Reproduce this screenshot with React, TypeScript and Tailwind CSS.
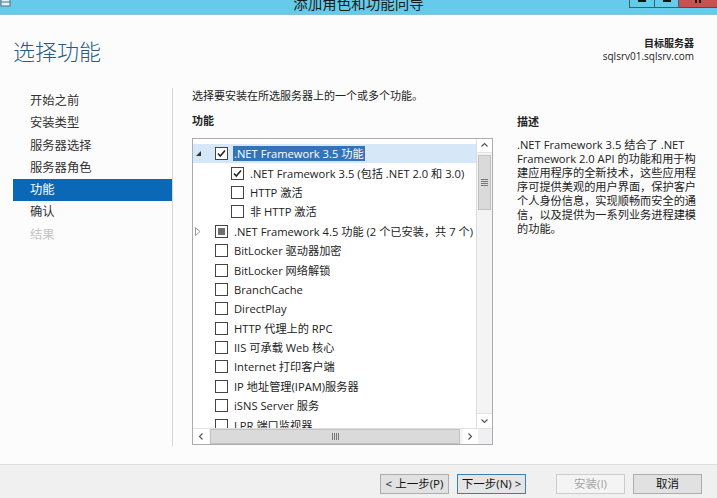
import React from "react";

type Row = {
  lvl: 1 | 2;
  arrow?: "open" | "closed";
  cb: "on" | "off" | "part";
  text: string;
  selected?: boolean;
};

const rows: Row[] = [
  { lvl: 1, arrow: "open", cb: "on", text: ".NET Framework 3.5 功能", selected: true },
  { lvl: 2, cb: "on", text: ".NET Framework 3.5 (包括 .NET 2.0 和 3.0)" },
  { lvl: 2, cb: "off", text: "HTTP 激活" },
  { lvl: 2, cb: "off", text: "非 HTTP 激活" },
  { lvl: 1, arrow: "closed", cb: "part", text: ".NET Framework 4.5 功能 (2 个已安装，共 7 个)" },
  { lvl: 1, cb: "off", text: "BitLocker 驱动器加密" },
  { lvl: 1, cb: "off", text: "BitLocker 网络解锁" },
  { lvl: 1, cb: "off", text: "BranchCache" },
  { lvl: 1, cb: "off", text: "DirectPlay" },
  { lvl: 1, cb: "off", text: "HTTP 代理上的 RPC" },
  { lvl: 1, cb: "off", text: "IIS 可承载 Web 核心" },
  { lvl: 1, cb: "off", text: "Internet 打印客户端" },
  { lvl: 1, cb: "off", text: "IP 地址管理(IPAM)服务器" },
  { lvl: 1, cb: "off", text: "iSNS Server 服务" },
  { lvl: 1, cb: "off", text: "LPR 端口监视器" },
];

const navItems = ["开始之前", "安装类型", "服务器选择", "服务器角色", "功能", "确认", "结果"];

const descLines = [
  ".NET Framework 3.5 结合了 .NET",
  "Framework 2.0 API 的功能和用于构",
  "建应用程序的全新技术，这些应用程",
  "序可提供美观的用户界面，保护客户",
  "个人身份信息，实现顺畅而安全的通",
  "信，以及提供为一系列业务进程建模",
  "的功能。",
];

function CheckBox({ state }: { state: "on" | "off" | "part" }) {
  return (
    <div className="w-[13px] h-[13px] border border-[#444] bg-white flex items-center justify-center shrink-0">
      {state === "on" && (
        <svg width="11" height="11" viewBox="0 0 11 11">
          <path d="M2 5.5 L4.3 8 L9 2.5" fill="none" stroke="#222" strokeWidth="1.5" />
        </svg>
      )}
      {state === "part" && <div className="w-[7px] h-[7px] bg-[#6e6e6e]" />}
    </div>
  );
}

function Arrow({ kind }: { kind?: "open" | "closed" }) {
  if (kind === "open")
    return (
      <svg width="7" height="7" viewBox="0 0 7 7">
        <path d="M6 1 L6 6 L1 6 Z" fill="#333" />
      </svg>
    );
  if (kind === "closed")
    return (
      <svg width="6" height="9" viewBox="0 0 6 9">
        <path d="M0.5 0.5 L5 4.5 L0.5 8.5 Z" fill="none" stroke="#9a9a9a" strokeWidth="1" />
      </svg>
    );
  return null;
}

function Chevron({ dir }: { dir: "up" | "down" | "left" | "right" }) {
  const d =
    dir === "up"
      ? "M1.5 5.5 L4.5 2.5 L7.5 5.5"
      : dir === "down"
      ? "M1.5 2.5 L4.5 5.5 L7.5 2.5"
      : dir === "left"
      ? "M5.5 1.5 L2.5 4.5 L5.5 7.5"
      : "M2.5 1.5 L5.5 4.5 L2.5 7.5";
  return (
    <svg width="9" height="9" viewBox="0 0 9 9">
      <path d={d} fill="none" stroke="#555" strokeWidth="1.2" />
    </svg>
  );
}

function Button({ children, variant }: { children: React.ReactNode; variant?: "focus" | "disabled" }) {
  const cls =
    variant === "focus"
      ? "border-[#3c7fb1] bg-[#e5e5e5] text-[#111]"
      : variant === "disabled"
      ? "border-[#cccccc] bg-[#f4f4f4] text-[#a3a3a3]"
      : "border-[#adadad] bg-[#e1e1e1] text-[#111]";
  return (
    <div className={`w-[69px] h-[20px] border flex items-center justify-center text-[11.5px] leading-[18px] ${cls}`}>
      {children}
    </div>
  );
}

export default function App() {
  return (
    <div className="w-[717px] h-[498px] flex flex-col overflow-hidden bg-[#fcfcfc] font-['Open_Sans','Noto_Sans_CJK_SC',sans-serif] text-[#1e1e1e]">
      {/* Title bar */}
      <div className="h-[15px] shrink-0 bg-[#66cbea] border-b border-[#88c3d8] grid grid-cols-[1fr_auto_1fr] overflow-hidden">
        <div className="flex items-start">
          <svg width="12" height="8" viewBox="0 0 12 8">
            <rect x="1" y="-2" width="9" height="8" fill="#dff3fa" stroke="#5b6f78" strokeWidth="1" />
            <path d="M1 2 H10" stroke="#5b6f78" strokeWidth="1" />
          </svg>
        </div>
        <div className="flex items-start justify-center">
          <span className="text-[14.5px] leading-[15px] mt-[-5px] text-[#1b1b1b] font-['Noto_Sans_CJK_SC',sans-serif]">
            添加角色和功能向导
          </span>
        </div>
        <div className="flex justify-end items-start">
          <div className="w-[26px] h-[8px] border border-t-0 border-[#3e5f6e] bg-[#66cbea] flex justify-center">
            <div className="w-[8px] h-[2px] bg-[#111]" />
          </div>
          <div className="w-[24px] h-[8px] border border-t-0 border-l-0 border-[#3e5f6e] bg-[#66cbea] flex justify-center">
            <div className="w-[8px] h-[2px] bg-[#111]" />
          </div>
          <div className="w-[38px] h-[8px] bg-[#c75050] border-b border-[#7a3a3a] flex justify-center">
            <div className="w-[2px] h-[3px] bg-[#2a1010] mr-[2px]" />
            <div className="w-[2px] h-[3px] bg-[#2a1010]" />
          </div>
        </div>
      </div>

      {/* Header */}
      <div className="h-[73px] shrink-0 flex justify-between">
        <div className="pl-[13px] pt-[20px] text-[22px] leading-[31px] text-[#245c85] font-['Noto_Sans_CJK_SC',sans-serif] font-light">
          选择功能
        </div>
        <div className="pr-[23px] pt-[22px] text-[10px] leading-[12.5px] text-right text-[#222]">
          <div className="font-semibold">目标服务器</div>
          <div>sqlsrv01.sqlsrv.com</div>
        </div>
      </div>

      {/* Body */}
      <div className="h-[358px] shrink-0 flex">
        <div className="w-[173px] shrink-0 border-r border-[#d6d6d6] pt-[2px]">
          {navItems.map((n, i) => (
            <div
              key={n}
              className={`ml-[13px] h-[22.3px] pl-[17px] flex items-center text-[12.3px] ${
                i === 4 ? "bg-[#0a68b6] text-white" : i === 6 ? "text-[#c4c4c4]" : "text-[#333]"
              }`}
            >
              {n}
            </div>
          ))}
        </div>

        <div className="flex pl-[19px] pt-[1px]">
          <div className="w-[301px] flex flex-col">
            <div className="text-[11px] leading-[14px] text-[#222] whitespace-nowrap">
              选择要安装在所选服务器上的一个或多个功能。
            </div>
            <div className="mt-[11px] text-[11px] leading-[14px] font-bold text-[#222]">功能</div>
            <div className="mt-[10px] h-[307px] border border-[#a9abb0] bg-white flex flex-col">
              <div className="flex h-[289px]">
                <div className="flex-1 pt-[5px] overflow-hidden">
                  {rows.map((r, i) => (
                    <div
                      key={i}
                      className={`h-[19.4px] flex items-center whitespace-nowrap text-[11.2px] ${
                        r.selected ? "bg-[#d6e8f8]" : ""
                      }`}
                    >
                      {r.lvl === 1 ? (
                        <div className="w-[22px] shrink-0 pl-[2px] flex items-center">
                          <Arrow kind={r.arrow} />
                        </div>
                      ) : (
                        <div className="w-[38px] shrink-0" />
                      )}
                      <CheckBox state={r.cb} />
                      <span
                        className={`ml-[5px] px-[1px] leading-[15px] ${
                          r.selected ? "bg-[#3373b8] text-white" : "text-[#222]"
                        }`}
                      >
                        {r.text}
                      </span>
                    </div>
                  ))}
                </div>
                <div className="w-[16px] shrink-0 bg-[#f4f4f4] border-l border-[#dcdcdc] flex flex-col">
                  <div className="h-[14px] bg-white flex items-center justify-center border-b border-[#e4e4e4]">
                    <Chevron dir="up" />
                  </div>
                  <div className="mt-[2px] mx-[1px] h-[55px] bg-[#dadada] border border-[#c2c2c2] flex flex-col items-center justify-center gap-[1px]">
                    <div className="w-[7px] h-[1px] bg-[#777]" />
                    <div className="w-[7px] h-[1px] bg-[#777]" />
                    <div className="w-[7px] h-[1px] bg-[#777]" />
                    <div className="w-[7px] h-[1px] bg-[#777]" />
                  </div>
                  <div className="flex-1" />
                  <div className="h-[15px] bg-white flex items-center justify-center border-t border-[#e4e4e4]">
                    <Chevron dir="down" />
                  </div>
                </div>
              </div>
              <div className="h-[16px] flex border-t border-[#e0e0e0] bg-[#f4f4f4]">
                <div className="w-[16px] bg-white flex items-center justify-center">
                  <Chevron dir="left" />
                </div>
                <div className="ml-[1px] w-[250px] bg-[#dadada] border border-[#c2c2c2] flex items-center justify-center gap-[1px]">
                  <div className="w-[1px] h-[7px] bg-[#777]" />
                  <div className="w-[1px] h-[7px] bg-[#777]" />
                  <div className="w-[1px] h-[7px] bg-[#777]" />
                  <div className="w-[1px] h-[7px] bg-[#777]" />
                </div>
                <div className="ml-[3px] w-[15px] bg-white flex items-center justify-center">
                  <Chevron dir="right" />
                </div>
                <div className="flex-1 bg-[#f0f0f0]" />
              </div>
            </div>
          </div>

          <div className="ml-[24px] w-[190px] pt-[26px]">
            <div className="text-[11px] leading-[14px] font-bold text-[#222]">描述</div>
            <div className="mt-[9px] text-[11.2px] leading-[14px] text-[#222] whitespace-nowrap">
              {descLines.map((l) => (
                <div key={l}>{l}</div>
              ))}
            </div>
          </div>
        </div>
      </div>

      <div className="h-[18px] shrink-0" />

      {/* Footer */}
      <div className="flex-1 bg-[#f0f0f0] border-t border-[#dedede] flex justify-end items-start pt-[9px] pr-[15px]">
        <Button>&lt; 上一步(P)</Button>
        <div className="w-[8px]" />
        <Button variant="focus">下一步(N) &gt;</Button>
        <div className="w-[30px]" />
        <Button variant="disabled">安装(I)</Button>
        <div className="w-[8px]" />
        <Button>取消</Button>
      </div>
    </div>
  );
}
